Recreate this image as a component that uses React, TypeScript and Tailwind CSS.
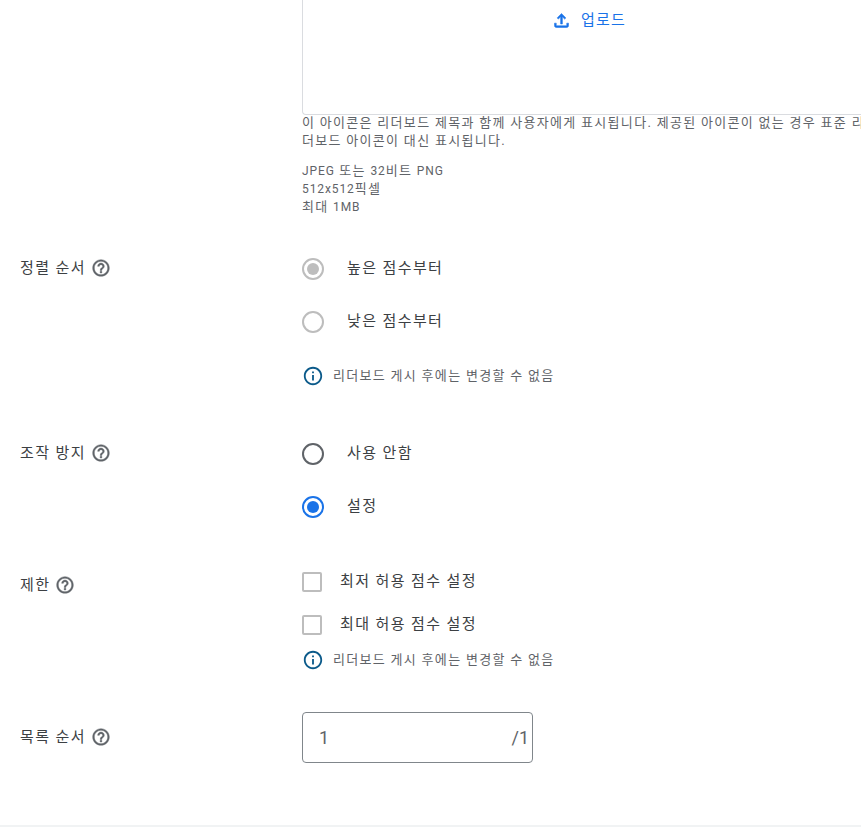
import type { ReactNode } from "react";

const FONT = "font-['Roboto','Noto_Sans_CJK_KR',sans-serif]";
const LABEL = "text-[15px] tracking-[1.4px] text-[#3c4043]";
const SMALL = "text-[13px] leading-[18px] tracking-[1.3px] text-[#5f6368]";
const LATIN = "text-[12px] tracking-[0.9px]";

function Help() {
  return (
    <svg width="20" height="20" viewBox="0 0 24 24" fill="#5f6368" stroke="#5f6368" strokeWidth="0.5" className="shrink-0">
      <path d="M11 18h2v-2h-2v2zm1-16C6.48 2 2 6.48 2 12s4.48 10 10 10 10-4.48 10-10S17.52 2 12 2zm0 18c-4.41 0-8-3.59-8-8s3.59-8 8-8 8 3.59 8 8-3.59 8-8 8zm0-14c-2.21 0-4 1.79-4 4h2c0-1.1.9-2 2-2s2 .9 2 2c0 2-3 1.75-3 5h2c0-2.25 3-2.5 3-5 0-2.21-1.79-4-4-4z" />
    </svg>
  );
}

function Info() {
  return (
    <div className="flex items-center gap-[9px]">
      <svg width="22" height="22" viewBox="0 0 24 24" fill="#0b5a8a" className="shrink-0">
        <path d="M11 7h2v2h-2zm0 4h2v6h-2zm1-9C6.48 2 2 6.48 2 12s4.48 10 10 10 10-4.48 10-10S17.52 2 12 2zm0 18c-4.41 0-8-3.59-8-8s3.59-8 8-8 8 3.59 8 8-3.59 8-8 8z" />
      </svg>
      <span className={SMALL}>리더보드 게시 후에는 변경할 수 없음</span>
    </div>
  );
}

function Radio({ label, state }: { label: string; state: "disabled" | "disabledOn" | "off" | "on" }) {
  const ring = state === "on" ? "border-[#1a73e8]" : state === "off" ? "border-[#5f6368]" : "border-[#bdbdbd]";
  return (
    <div className="flex h-[22px] items-center gap-[23px]">
      <span className={`flex h-[22px] w-[22px] items-center justify-center rounded-full border-2 ${ring}`}>
        {state === "on" && <span className="h-[12px] w-[12px] rounded-full bg-[#1a73e8]" />}
        {state === "disabledOn" && <span className="h-[12px] w-[12px] rounded-full bg-[#bdbdbd]" />}
      </span>
      <span className={`${LABEL} mt-[-2px]`}>{label}</span>
    </div>
  );
}

function Check({ label }: { label: string }) {
  return (
    <div className="flex h-[20px] items-center gap-[18px]">
      <span className="h-[20px] w-[20px] rounded-[2px] border-2 border-[#bdbdbd]" />
      <span className={`${LABEL} mt-[-2px]`}>{label}</span>
    </div>
  );
}

function Row({ label, top, children }: { label: string; top: string; children: ReactNode }) {
  return (
    <div className="flex">
      <div className={`flex w-[282px] shrink-0 items-start gap-[5px] ${top}`}>
        <span className={`${LABEL} leading-[20px]`}>{label}</span>
        <Help />
      </div>
      <div className="w-[560px] shrink-0">{children}</div>
    </div>
  );
}

export default function App() {
  return (
    <div className={`${FONT} flex h-[827px] w-[861px] flex-col overflow-hidden bg-white pl-[20px]`}>
      <div className="ml-[282px] w-[568px]">
        <div className="flex h-[115px] w-[572px] justify-center rounded-bl border-b border-l border-[#dadce0]">
          <div className="flex h-[40px] items-center gap-[9px] text-[15px] tracking-[1.2px] text-[#1a73e8]">
            <svg width="21" height="21" viewBox="0 0 24 24" fill="#1a73e8" stroke="#1a73e8" strokeWidth="0.6">
              <path d="M18 15v3H6v-3H4v3c0 1.1.9 2 2 2h12c1.1 0 2-.9 2-2v-3h-2zM7 9l1.41 1.41L11 7.83V16h2V7.83l2.59 2.58L17 9l-5-5-5 5z" />
            </svg>
            <span>업로드</span>
          </div>
        </div>
        <p className={`${SMALL} mt-[-1px] [word-break:break-all]`}>
          이 아이콘은 리더보드 제목과 함께 사용자에게 표시됩니다. 제공된 아이콘이 없는 경우 표준 리더보드 아이콘이 대신 표시됩니다.
        </p>
        <p className={`${SMALL} mt-[12px]`}>
          <span className={LATIN}>JPEG</span> 또는 <span className={LATIN}>32</span>비트 <span className={LATIN}>PNG</span>
          <br />
          <span className={LATIN}>512x512</span>픽셀
          <br />
          최대 <span className={LATIN}>1MB</span>
        </p>
      </div>

      <div className="mt-[42px]">
        <Row label="정렬 순서" top="pt-0">
          <div className="flex flex-col gap-[31px]">
            <Radio label="높은 점수부터" state="disabledOn" />
            <Radio label="낮은 점수부터" state="disabled" />
          </div>
          <div className="mt-[32px]">
            <Info />
          </div>
        </Row>
      </div>

      <div className="mt-[56px]">
        <Row label="조작 방지" top="pt-0">
          <div className="flex flex-col gap-[31px]">
            <Radio label="사용 안함" state="off" />
            <Radio label="설정" state="on" />
          </div>
        </Row>
      </div>

      <div className="mt-[54px]">
        <Row label="제한" top="pt-[3px]">
          <div className="flex flex-col gap-[23px]">
            <Check label="최저 허용 점수 설정" />
            <Check label="최대 허용 점수 설정" />
          </div>
          <div className="mt-[14px]">
            <Info />
          </div>
        </Row>
      </div>

      <div className="mt-[41px]">
        <Row label="목록 순서" top="pt-[15px]">
          <div className="flex h-[51px] w-[231px] items-center justify-between rounded border border-[#80868b] pl-[16px] pr-[3px] text-[18px] text-[#5f6368]">
            <span>1</span>
            <span>/1</span>
          </div>
        </Row>
      </div>

      <div className="mt-auto ml-[-20px] h-[2px] bg-[#f1f3f4]" />
    </div>
  );
}
